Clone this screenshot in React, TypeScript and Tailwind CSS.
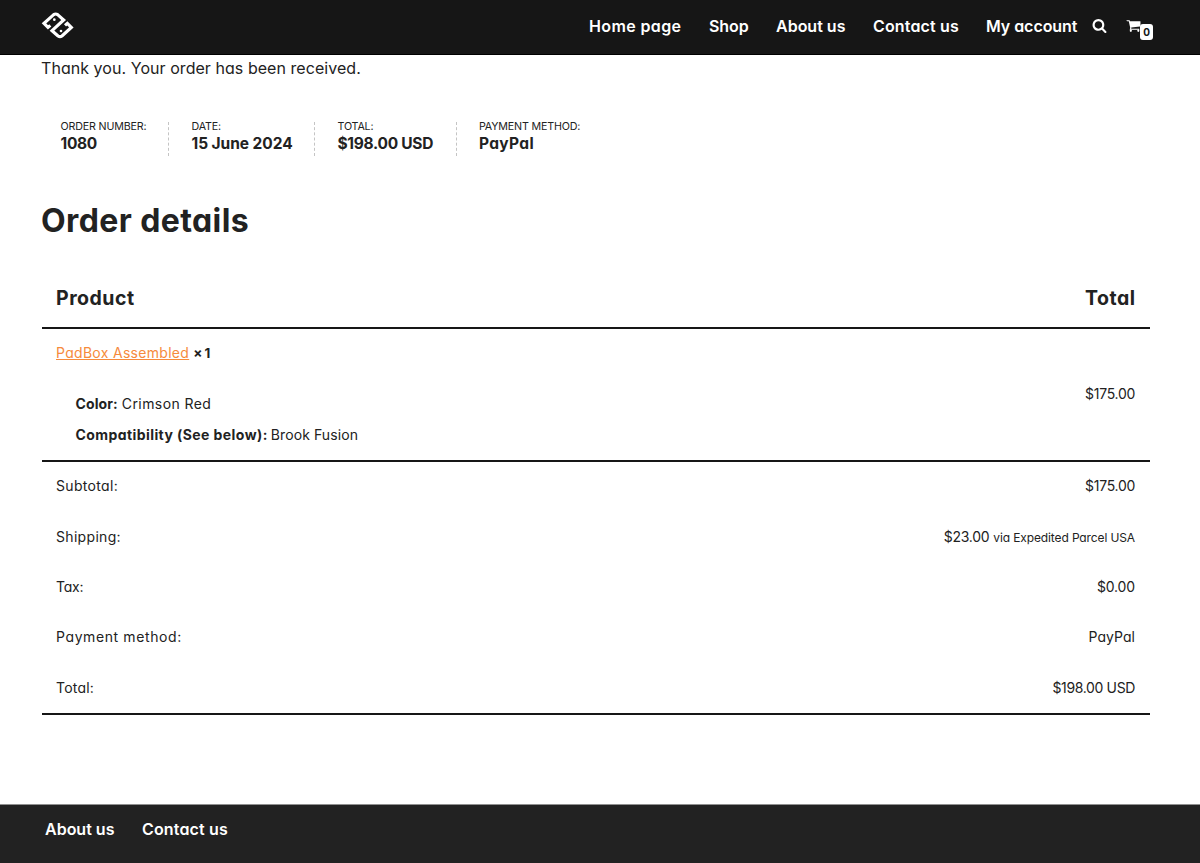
const headerLinks = [
  { text: "Home page", style: "w-[120px] tracking-[0.38px]" },
  { text: "Shop", style: "w-[67px] tracking-[-0.1px]" },
  { text: "About us", style: "w-[97px]" },
  { text: "Contact us", style: "w-[113px] tracking-[0.15px]" },
  { text: "My account", style: "w-[92px] tracking-[-0.05px]" },
];

const overview = [
  { label: "Order number:", value: "1080", box: "w-[108.5px] border-r", tracking: "tracking-[-0.3px]" },
  { label: "Date:", value: "15 June 2024", box: "w-[146px] border-r pl-[22.5px]", tracking: "tracking-[-0.05px]" },
  { label: "Total:", value: "$198.00 USD", box: "w-[142px] border-r pl-[22.5px]", tracking: "tracking-[-0.28px]" },
  { label: "Payment method:", value: "PayPal", box: "pl-[22px]", tracking: "tracking-[0.33px]" },
];

const summary = [
  { label: "Subtotal:", value: "$175.00", left: "tracking-[0.32px]", right: "tracking-[-0.28px]" },
  {
    label: "Shipping:",
    value: "$23.00",
    note: "via Expedited Parcel USA",
    left: "tracking-[0.32px]",
    right: "tracking-[-0.28px]",
  },
  { label: "Tax:", value: "$0.00", left: "tracking-[-0.25px]", right: "tracking-[-0.15px]" },
  { label: "Payment method:", value: "PayPal", left: "tracking-[0.6px]", right: "tracking-[0.05px]" },
  { label: "Total:", value: "$198.00 USD", left: "tracking-[0.2px]", right: "tracking-[-0.36px]" },
];

function Logo() {
  return (
    <svg className="size-9" viewBox="0 0 108 108" fill="none" stroke="white" strokeWidth="9.5">
      <path d="M31 52 L24 58 L12 46 L41 20 Q47 16 53 20 L71 36 L36 68 L54 84 Q60 88 66 84 L94 58 L82 46 L75 52" />
      <circle cx="43" cy="35" r="4" fill="white" stroke="none" />
      <circle cx="63" cy="69" r="4" fill="white" stroke="none" />
    </svg>
  );
}

function SearchIcon() {
  return (
    <svg className="size-[15px]" viewBox="0 0 1792 1792" fill="currentColor">
      <path d="M1216 832q0-185-131.5-316.5t-316.5-131.5-316.5 131.5-131.5 316.5 131.5 316.5 316.5 131.5 316.5-131.5 131.5-316.5zm512 832q0 52-38 90t-90 38q-54 0-90-38l-343-342q-179 124-399 124-143 0-273.5-55.5t-225-150-150-225-55.5-273.5 55.5-273.5 150-225 225-150 273.5-55.5 273.5 55.5 225 150 150 225 55.5 273.5q0 220-124 399l343 343q37 37 37 90z" />
    </svg>
  );
}

function CartIcon() {
  return (
    <svg className="size-[15px]" viewBox="0 0 1792 1792" fill="currentColor">
      <path d="M704 1536q0 52-38 90t-90 38-90-38-38-90 38-90 90-38 90 38 38 90zm896 0q0 52-38 90t-90 38-90-38-38-90 38-90 90-38 90 38 38 90zm128-1088v512q0 24-16.5 42.5t-40.5 21.5l-1044 122q13 60 13 70 0 16-24 64h920q26 0 45 19t19 45-19 45-45 19h-1024q-26 0-45-19t-19-45q0-11 8-31.5t16-36 21.5-40 15.5-29.5l-177-823h-204q-26 0-45-19t-19-45 19-45 45-19h256q16 0 28.5 6.5t19.5 15.5 13 24.5 8 26 5.5 29.5 4.5 26h1201q26 0 45 19t19 45z" />
    </svg>
  );
}

export default function App() {
  return (
    <div className="flex h-[863px] w-full flex-col overflow-hidden whitespace-nowrap bg-white font-['Inter',sans-serif] text-base text-[#222222] [font-feature-settings:'cv11']">
      <header className="flex h-[55px] shrink-0 items-center border-b border-black bg-[#161616] pb-[3px] pl-10 text-white">
        <Logo />
        <nav className="ml-[513px] flex font-semibold">
          {headerLinks.map((link) => (
            <a key={link.text} className={link.style}>
              {link.text}
            </a>
          ))}
        </nav>
        <div className="ml-[14px]">
          <SearchIcon />
        </div>
        <div className="relative ml-[19px]">
          <CartIcon />
          <span className="absolute left-[14px] top-[6px] flex h-4 w-[13px] items-center justify-center rounded-[3px] bg-white text-[10px] font-bold text-[#161616]">
            0
          </span>
        </div>
      </header>

      <main className="flex-1 pl-[42px] pr-[50px]">
        <p className="-ml-px leading-[27px] tracking-[0.05px]">Thank you. Your order has been received.</p>

        <ul className="mt-10 flex pl-[18.5px]">
          {overview.map((item) => (
            <li key={item.label} className={`h-[34px] border-dashed border-[#c4c4c4] ${item.box}`}>
              <div className="text-[10.7px] uppercase leading-[10px] tracking-[-0.17px]">{item.label}</div>
              <div className={`text-[15.5px] font-bold leading-6 ${item.tracking}`}>{item.value}</div>
            </li>
          ))}
        </ul>

        <h2 className="-ml-px mt-[45px] text-[32px] font-bold leading-10 tracking-[0.4px]">Order details</h2>

        <section className="mt-[27px]">
          <div className="flex h-[61px] items-center justify-between border-b-2 border-[#161616] pl-[14px] pr-[15px] pt-[2px] text-[19.5px] font-bold tracking-[0.5px]">
            <span>Product</span>
            <span className="-mr-[0.5px]">Total</span>
          </div>

          <div className="flex h-[133px] items-center justify-between border-b-2 border-[#161616] pb-[2px] pl-[14px] pr-[15px] text-sm leading-6">
            <div>
              <div className="flex gap-1">
                <a className="tracking-[0.3px] text-[#f68b3c] underline">PadBox Assembled</a>
                <strong className="text-[13.5px] tracking-[-0.5px]">× 1</strong>
              </div>
              <ul className="mt-[27px] flex flex-col gap-[7px] pl-[19.5px]">
                <li className="flex gap-1">
                  <strong className="tracking-[0.1px]">Color:</strong>
                  <span className="tracking-[0.42px]">Crimson Red</span>
                </li>
                <li className="flex gap-[3px]">
                  <strong className="tracking-[0.42px]">Compatibility (See below):</strong>
                  <span className="tracking-[0.1px]">Brook Fusion</span>
                </li>
              </ul>
            </div>
            <span className="tracking-[-0.28px]">$175.00</span>
          </div>

          <div className="h-[253px] border-b-2 border-[#161616] text-sm">
            <div className="-mt-[0.25px]">
              {summary.map((row) => (
                <div key={row.label} className="flex h-[50.3px] items-center justify-between pb-px pl-[14px] pr-[15px]">
                  <span className={row.left}>{row.label}</span>
                  <span className="flex items-baseline gap-1">
                    <span className={row.right}>{row.value}</span>
                    {row.note && <small className="text-[12px] tracking-[-0.12px]">{row.note}</small>}
                  </span>
                </div>
              ))}
            </div>
          </div>
        </section>
      </main>

      <footer className="flex h-[59px] shrink-0 border-t border-[#909090] bg-[#222222] pl-[45px] pt-3 font-semibold text-white">
        <a className="w-[97px]">About us</a>
        <a className="tracking-[0.15px]">Contact us</a>
      </footer>
    </div>
  );
}
